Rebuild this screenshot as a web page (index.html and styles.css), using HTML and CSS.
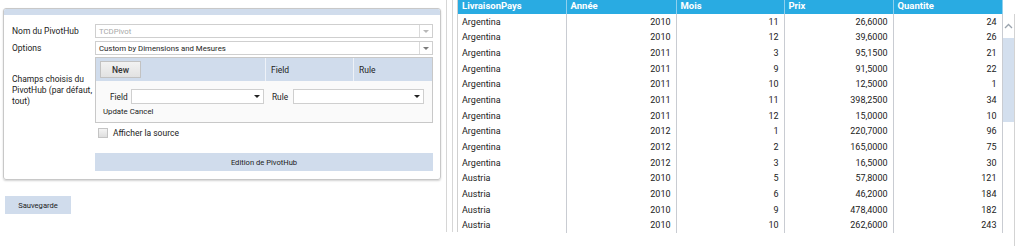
FILE: index.html
```html
<!DOCTYPE html>
<html lang="fr">
<head>
    <meta charset="UTF-8">
    <title>PivotHub</title>
    <link rel="stylesheet" href="styles.css">
</head>
<body>
    <div class="left-pane">
        <div class="panel">
            <div class="panel-head"></div>
            <div class="panel-body">
                <div class="form-row">
                    <label class="form-label">Nom du PivotHub</label>
                    <div class="combo combo-disabled">
                        <span class="combo-text">TCDPivot</span>
                        <span class="combo-btn"><span class="caret"></span></span>
                    </div>
                </div>
                <div class="form-row form-row-tight">
                    <label class="form-label">Options</label>
                    <div class="combo">
                        <span class="combo-text">Custom by Dimensions and Mesures</span>
                        <span class="combo-btn"><span class="caret"></span></span>
                    </div>
                </div>
                <div class="form-row">
                    <label class="form-label">Champs choisis du PivotHub (par défaut, tout)</label>
                    <div class="rule-grid">
                        <div class="rule-head">
                            <div class="rule-cell rule-cell-new"><button class="btn-new">New</button></div>
                            <div class="rule-cell">Field</div>
                            <div class="rule-cell rule-cell-last">Rule</div>
                        </div>
                        <div class="rule-edit">
                            <div class="rule-edit-fields">
                                <span class="edit-label">Field</span>
                                <div class="combo combo-small combo-field">
                                    <span class="combo-text"></span>
                                    <span class="combo-btn combo-btn-plain"><span class="caret caret-dark"></span></span>
                                </div>
                                <span class="edit-label edit-label-rule">Rule</span>
                                <div class="combo combo-small combo-rule">
                                    <span class="combo-text"></span>
                                    <span class="combo-btn combo-btn-plain"><span class="caret caret-dark"></span></span>
                                </div>
                            </div>
                            <div class="rule-actions">Update Cancel</div>
                        </div>
                    </div>
                </div>
                <div class="form-row">
                    <span class="form-label"></span>
                    <label class="check-row"><span class="check-box"></span>Afficher la source</label>
                </div>
                <div class="form-row">
                    <span class="form-label"></span>
                    <button class="btn-wide">Edition de PivotHub</button>
                </div>
            </div>
        </div>
        <button class="btn-save">Sauvegarde</button>
    </div>

    <div class="splitter"></div>

    <div class="right-pane">
        <table class="data-grid">
            <colgroup>
                <col style="width:108px"><col style="width:110px"><col style="width:108px"><col style="width:109px"><col style="width:109px">
            </colgroup>
            <thead>
                <tr><th>LivraisonPays</th><th>Année</th><th>Mois</th><th>Prix</th><th>Quantite</th></tr>
            </thead>
            <tbody>
                <tr><td>Argentina</td><td class="num">2010</td><td class="num">11</td><td class="num">26,6000</td><td class="num">24</td></tr>
                <tr><td>Argentina</td><td class="num">2010</td><td class="num">12</td><td class="num">39,6000</td><td class="num">26</td></tr>
                <tr><td>Argentina</td><td class="num">2011</td><td class="num">3</td><td class="num">95,1500</td><td class="num">21</td></tr>
                <tr><td>Argentina</td><td class="num">2011</td><td class="num">9</td><td class="num">91,5000</td><td class="num">22</td></tr>
                <tr><td>Argentina</td><td class="num">2011</td><td class="num">10</td><td class="num">12,5000</td><td class="num">1</td></tr>
                <tr><td>Argentina</td><td class="num">2011</td><td class="num">11</td><td class="num">398,2500</td><td class="num">34</td></tr>
                <tr><td>Argentina</td><td class="num">2011</td><td class="num">12</td><td class="num">15,0000</td><td class="num">10</td></tr>
                <tr><td>Argentina</td><td class="num">2012</td><td class="num">1</td><td class="num">220,7000</td><td class="num">96</td></tr>
                <tr><td>Argentina</td><td class="num">2012</td><td class="num">2</td><td class="num">165,0000</td><td class="num">75</td></tr>
                <tr><td>Argentina</td><td class="num">2012</td><td class="num">3</td><td class="num">16,5000</td><td class="num">30</td></tr>
                <tr><td>Austria</td><td class="num">2010</td><td class="num">5</td><td class="num">57,8000</td><td class="num">121</td></tr>
                <tr><td>Austria</td><td class="num">2010</td><td class="num">6</td><td class="num">46,2000</td><td class="num">184</td></tr>
                <tr><td>Austria</td><td class="num">2010</td><td class="num">9</td><td class="num">478,4000</td><td class="num">182</td></tr>
                <tr><td>Austria</td><td class="num">2010</td><td class="num">10</td><td class="num">262,6000</td><td class="num">243</td></tr>
            </tbody>
        </table>
        <div class="scrollbar">
            <div class="scroll-up">
                <svg width="9" height="6" viewBox="0 0 9 6"><path d="M1 5 L4.5 1.5 L8 5" fill="none" stroke="#9aa3ad" stroke-width="1.3"/></svg>
            </div>
            <div class="scroll-thumb"></div>
        </div>
    </div>
</body>
</html>
```

FILE: styles.css
```css
:root {
    --light-blue: #d0dcec;
    --grid-blue: #29abe2;
    --border-grey: #c8c8c8;
    --text-color: #222;
}

* {
    box-sizing: border-box;
    margin: 0;
    padding: 0;
}

body {
    font-family: Roboto, "Liberation Sans", Arial, sans-serif;
    font-size: 9px;
    color: var(--text-color);
    background: white;
    display: flex;
    align-items: flex-start;
    height: 248px;
    overflow: hidden;
}

/* left side: PivotHub form */

.left-pane {
    width: 447px;
    height: 232px;
    padding: 8px 0 0 3px;
    border-right: 1px solid #d6d6d6;
}

.panel {
    width: 438px;
    border: 1px solid var(--border-grey);
    border-radius: 3px;
    box-shadow: 0 1px 2px rgba(0, 0, 0, 0.18);
    overflow: hidden;
}

.panel-head {
    height: 6px;
    background-color: var(--light-blue);
}

.panel-body {
    padding: 9px 7px 5px 7px;
}

.form-row {
    display: flex;
    align-items: center;
    margin-bottom: 3px;
}

.form-row-tight {
    margin-bottom: 2px;
}

.form-label {
    width: 84px;
    flex-shrink: 0;
    padding-left: 1px;
    font-size: 8.5px;
    line-height: 11px;
}

.combo {
    width: 338px;
    height: 14px;
    border: 1px solid #cfcfcf;
    background: white;
    display: flex;
    align-items: center;
}

.combo-text {
    flex: 1;
    padding-left: 3px;
    font-size: 7.8px;
    white-space: nowrap;
}

.combo-disabled .combo-text {
    color: #a8a8a8;
}

.combo-btn {
    width: 13px;
    height: 100%;
    border-left: 1px solid #dadada;
    display: flex;
    align-items: center;
    justify-content: center;
}

.combo-btn-plain {
    border-left: none;
}

.caret {
    width: 0;
    height: 0;
    border-left: 3px solid transparent;
    border-right: 3px solid transparent;
    border-top: 3px solid #7b7b7b;
}

.combo-disabled .caret {
    border-top-color: #b8b8b8;
}

.caret-dark {
    border-top-color: #222;
}

/* rules grid */

.rule-grid {
    width: 338px;
    height: 66px;
    border: 1px solid var(--border-grey);
    background: #fafafa;
}

.rule-head {
    display: flex;
    height: 23px;
    background-color: var(--light-blue);
}

.rule-cell {
    display: flex;
    align-items: center;
    padding-left: 5px;
    border-right: 1px solid #eef2f8;
    width: 88px;
    font-size: 8.5px;
}

.rule-cell-new {
    width: 170px;
    padding-left: 4px;
}

.rule-cell-last {
    flex: 1;
    border-right: none;
}

.btn-new {
    width: 41px;
    height: 17px;
    border: 1px solid #c2c2c2;
    background: linear-gradient(#f2f2f2, #e2e2e2);
    font-family: inherit;
    font-size: 8.5px;
    font-weight: 500;
    color: #333;
}

.rule-edit {
    padding-top: 8px;
}

.rule-edit-fields {
    display: flex;
    align-items: center;
    padding-left: 14px;
}

.edit-label {
    font-size: 8.3px;
    width: 21px;
}

.edit-label-rule {
    margin-left: 8px;
}

.combo-small {
    height: 15px;
}

.combo-field {
    width: 133px;
}

.combo-rule {
    width: 131px;
}

.rule-actions {
    margin-top: 2px;
    padding-left: 7px;
    font-size: 7.8px;
    line-height: 11px;
}

.check-row {
    display: flex;
    align-items: center;
    margin-left: 3px;
    height: 14px;
    font-size: 8.5px;
}

.check-box {
    width: 10px;
    height: 10px;
    border: 1px solid #c4c4c4;
    background: linear-gradient(#f4f4f4, #dedede);
    margin-right: 5px;
}

.btn-wide {
    width: 338px;
    height: 18px;
    margin-top: 10px;
    border: none;
    background-color: var(--light-blue);
    font-family: inherit;
    font-size: 7.6px;
    color: #222;
}

.btn-save {
    display: block;
    width: 66px;
    height: 18px;
    margin: 16px 0 0 2px;
    border: none;
    background-color: var(--light-blue);
    font-family: inherit;
    font-size: 7.6px;
    color: #222;
}

.splitter {
    width: 6px;
    height: 232px;
    border-right: 1px solid #d6d6d6;
    margin-right: 4px;
}

/* right side: data grid */

.right-pane {
    display: flex;
    align-items: flex-start;
    height: 232px;
    border-left: 1px solid #d0d0d0;
}

.data-grid {
    border-collapse: collapse;
    table-layout: fixed;
    width: 544px;
}

.data-grid th {
    height: 14px;
    background-color: var(--grid-blue);
    color: white;
    font-weight: bold;
    font-size: 9.5px;
    text-align: left;
    padding: 0 4px;
    border-right: 1px solid #8fd0ee;
    vertical-align: top;
    line-height: 12px;
}

.data-grid td {
    height: 15.67px;
    padding: 0 5px 0 4px;
    font-size: 9px;
    border-right: 1px solid #c9ccd2;
    white-space: nowrap;
}

.data-grid .num {
    text-align: right;
}

.scrollbar {
    width: 12px;
    height: 232px;
    margin-top: 14px;
    border-right: 1px solid #d3d3d3;
}

.scroll-up {
    height: 24px;
    display: flex;
    justify-content: center;
    align-items: center;
}

.scroll-thumb {
    width: 11px;
    height: 84px;
    background-color: #d3dfee;
}
```
